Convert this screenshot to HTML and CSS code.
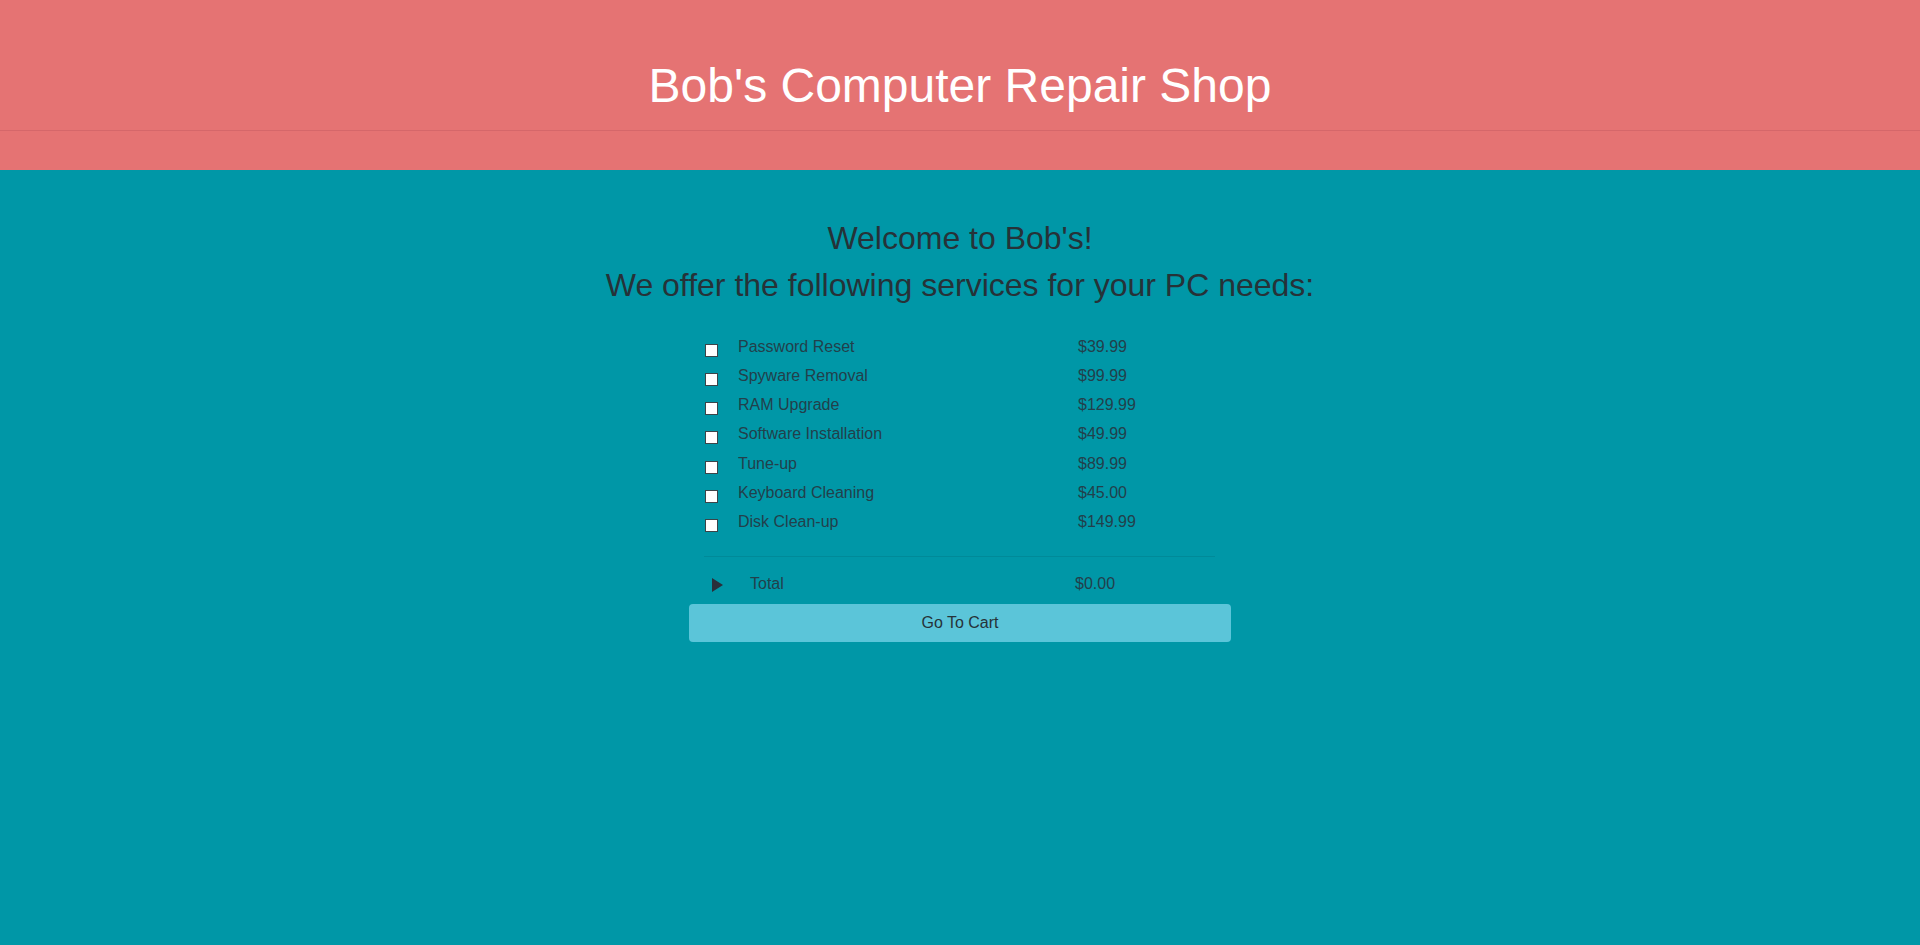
FILE: index.html
```html
<!DOCTYPE html>
<html lang="en">
<head>
<meta charset="utf-8">
<title>Bob's Computer Repair Shop</title>
<link rel="stylesheet" href="styles.css">
</head>
<body>
<header class="site-header">
  <div class="title-bar">
    <h1 class="site-title">Bob's Computer Repair Shop</h1>
  </div>
</header>
<main class="content">
  <h2 class="intro">Welcome to Bob's!</h2>
  <h2 class="intro">We offer the following services for your PC needs:</h2>
  <section class="cart">
    <ul class="services">
      <li class="service"><input type="checkbox" class="check"><span class="name">Password Reset</span><span class="price">$39.99</span></li>
      <li class="service"><input type="checkbox" class="check"><span class="name">Spyware Removal</span><span class="price">$99.99</span></li>
      <li class="service"><input type="checkbox" class="check"><span class="name">RAM Upgrade</span><span class="price">$129.99</span></li>
      <li class="service"><input type="checkbox" class="check"><span class="name">Software Installation</span><span class="price">$49.99</span></li>
      <li class="service"><input type="checkbox" class="check"><span class="name">Tune-up</span><span class="price">$89.99</span></li>
      <li class="service"><input type="checkbox" class="check"><span class="name">Keyboard Cleaning</span><span class="price">$45.00</span></li>
      <li class="service"><input type="checkbox" class="check"><span class="name">Disk Clean-up</span><span class="price">$149.99</span></li>
    </ul>
    <hr class="divider">
    <div class="total-row">
      <svg class="caret" width="11" height="14" viewBox="0 0 11 14"><polygon points="0,0 11,7 0,14"/></svg>
      <span class="total-label">Total</span>
      <span class="total-price">$0.00</span>
    </div>
    <button class="cart-btn" type="button">Go To Cart</button>
  </section>
</main>
</body>
</html>
```
FILE: styles.css
```css
html, body {
  margin: 0;
  padding: 0;
}

body {
  min-height: 100vh;
  background: #0097a7;
  font-family: "Liberation Sans", Arial, sans-serif;
  color: #263238;
}

.site-header {
  background: #e57373;
  padding: 59px 0 39px;
}

.title-bar {
  border-bottom: 1px solid #d5676a;
  padding-bottom: 18px;
}

.site-title {
  margin: 0;
  font-size: 48px;
  line-height: 53px;
  font-weight: normal;
  color: #ffffff;
  text-align: center;
}

.content {
  padding-top: 51px;
  text-align: center;
}

.intro {
  margin: 0;
  font-size: 32px;
  line-height: 35px;
  font-weight: normal;
  color: #263238;
}

.intro + .intro {
  margin-top: 12px;
}

.cart {
  width: 542px;
  margin: 29px auto 0;
  text-align: left;
}

.services {
  list-style: none;
  margin: 0;
  padding: 0 0 0 16px;
}

.service {
  display: grid;
  grid-template-columns: 13px 320px auto;
  column-gap: 20px;
  height: 29.17px;
  line-height: 29.17px;
  font-size: 16px;
  color: #22404b;
}

.check {
  appearance: none;
  -webkit-appearance: none;
  box-sizing: border-box;
  width: 13px;
  height: 13px;
  margin: 12px 0 0;
  background: #ffffff;
  border: 1px solid #3c4448;
  border-radius: 0;
}

.divider {
  height: 0;
  margin: 20px 16px 0 15px;
  border: 0;
  border-top: 1px solid #008a99;
}

.total-row {
  display: grid;
  grid-template-columns: 11px 298px auto;
  column-gap: 27px;
  margin-top: 15px;
  padding-left: 23px;
  height: 23px;
  line-height: 23px;
  font-size: 16px;
  color: #22404b;
}

.caret {
  margin-top: 6px;
  fill: #2a2e3a;
}

.cart-btn {
  display: block;
  width: 100%;
  margin-top: 9px;
  padding: 9px 0;
  border: 0;
  border-radius: 4px;
  background: #5bc5d9;
  font-family: "Liberation Sans", Arial, sans-serif;
  font-size: 16px;
  line-height: 20px;
  color: #263238;
  cursor: pointer;
}
```
